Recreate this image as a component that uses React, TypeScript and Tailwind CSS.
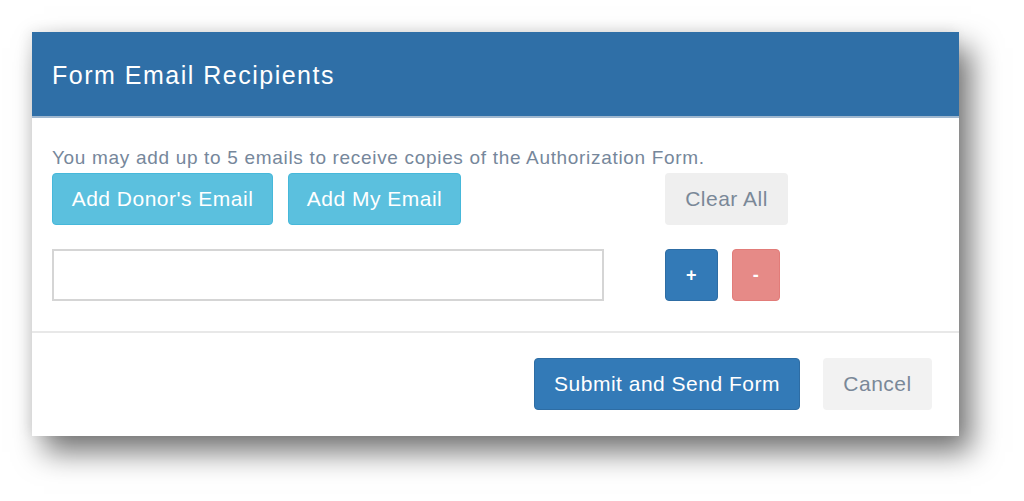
import React from "react";

const font = { fontFamily: '"Liberation Sans", Arial, sans-serif' };

export default function App() {
  return (
    <div className="w-[1024px] h-[501px] bg-white pt-[32px] pl-[32px]" style={font}>
      <div className="w-[927px] h-[404px] bg-white flex flex-col shadow-[12px_16px_28px_rgba(0,0,0,0.55),-3px_-2px_12px_rgba(0,0,0,0.07)]">
        <div className="h-[86px] shrink-0 bg-[#2f6fa7] border-b-2 border-[#9fb7cf] flex items-center px-[20px]">
          <h1 className="text-[25px] tracking-[1.5px] text-white leading-none pt-[2px]">Form Email Recipients</h1>
        </div>

        <div className="flex-1 px-[20px] pt-[30px] border-b-2 border-[#e8e8e8]">
          <p className="text-[19px] tracking-[0.68px] leading-[20px] text-[#76879b]">
            You may add up to 5 emails to receive copies of the Authorization Form.
          </p>
          <div className="grid grid-cols-[613px_auto] gap-y-[24px] mt-[5px] text-[21px] tracking-[0.5px]">
            <div className="flex gap-[15px]">
              <button className="w-[221px] h-[52px] rounded-[4px] bg-[#5bc0de] border border-[#46b8da] text-white">
                Add Donor's Email
              </button>
              <button className="w-[173px] h-[52px] rounded-[4px] bg-[#5bc0de] border border-[#46b8da] text-white">
                Add My Email
              </button>
            </div>
            <div>
              <button className="w-[123px] h-[52px] rounded-[4px] bg-[#efefef] text-[#7a8898]">
                Clear All
              </button>
            </div>
            <div>
              <input className="w-[552px] h-[52px] border-2 border-[#d5d5d5] bg-white outline-none px-2" />
            </div>
            <div className="flex gap-[14px]">
              <button className="w-[53px] h-[52px] rounded-[4px] bg-[#337ab7] border border-[#2e6da4] text-white text-[18px] font-bold">
                +
              </button>
              <button className="w-[48px] h-[52px] rounded-[4px] bg-[#e68a87] border border-[#e27c79] text-white text-[18px] font-bold">
                -
              </button>
            </div>
          </div>
        </div>

        <div className="h-[103px] shrink-0 flex items-start justify-end gap-[23px] pt-[25px] pr-[27px] text-[21px] tracking-[0.5px]">
          <button className="h-[52px] w-[266px] rounded-[4px] bg-[#337ab7] border border-[#2e6da4] text-white">
            Submit and Send Form
          </button>
          <button className="h-[52px] w-[109px] rounded-[4px] bg-[#f2f2f2] text-[#7a8898]">
            Cancel
          </button>
        </div>
      </div>
    </div>
  );
}
